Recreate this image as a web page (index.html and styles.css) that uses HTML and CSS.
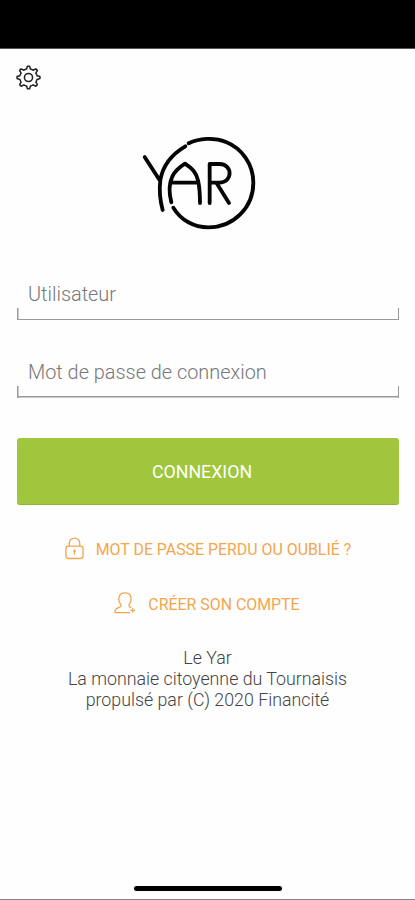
FILE: index.html
```
<!DOCTYPE html>
<html lang="fr">
<head>
<meta charset="utf-8">
<title>Le Yar</title>
<link rel="stylesheet" href="styles.css">
</head>
<body>
<div class="status"></div>
<main class="screen">
  <svg class="gear" viewBox="0 0 26 26"><path d="M11 4.2 11.9 1.2h2.2L15 4.2a9 9 0 0 1 2.8 1.2L20.6 4l1.6 1.6-1.5 2.8a9 9 0 0 1 1.2 2.7l3 .9v2.1l-3 .9a9 9 0 0 1-1.2 2.8l1.5 2.7-1.6 1.6-2.8-1.5A9 9 0 0 1 15 21.8l-.9 3h-2.2l-.9-3a9 9 0 0 1-2.8-1.2l-2.8 1.5-1.6-1.6 1.5-2.7A9 9 0 0 1 4.1 15l-3-.9V12l3-.9a9 9 0 0 1 1.2-2.7L3.8 5.6 5.4 4l2.8 1.4A9 9 0 0 1 11 4.2Z"/><circle cx="13" cy="13" r="4.2"/></svg>
  <svg class="logo" viewBox="0 0 390 345"><path d="M164 55C195 40 240 36 276 51C324 70 358 118 358 173C358 248 298 307 223 307C180 307 141 286 118 248M154 64C113 88 86 124 79 165C75 198 78 226 86 255M32 96 77 166M112 232C105 205 106 175 114 157C121 140 135 127 153 116C174 130 187 142 192 166Q198 192 198 234M111 173H191M227 234V117H256C297 117 297 173 256 173H227M248 175 285 234"/></svg>
  <form class="form">
    <label class="field"><span class="user">Utilisateur</span></label>
    <label class="field"><span class="pass">Mot de passe de connexion</span></label>
    <button class="login" type="button"><span>CONNEXION</span></button>
  </form>
  <a class="link lost"><svg class="lock" viewBox="0 0 20 24"><rect x="1" y="9.5" width="18" height="13" rx="2.5"/><path d="M4.5 9.5V6.5a5.5 5.5 0 0 1 11 0v3M10 15v3"/><circle cx="10" cy="14.5" r=".7"/></svg><span>MOT DE PASSE PERDU OU OUBLIÉ ?</span></a>
  <a class="link create"><svg class="person" viewBox="0 0 24 24"><path d="M17 22.5H1.2C.8 19 2.3 17.8 5 17c3-.8 3.2-1.8 2.4-3.6C5 10.5 4.8 7 6 4c2-4 10-4 12 0 1.2 3 .8 6.5-1.4 9.400-.6 1.600-.2 2.800 1.800 3.400M18.500 20h4M20.500 18v4"/></svg><span>CRÉER SON COMPTE</span></a>
  <footer class="about">
    <p>Le Yar</p>
    <p>La monnaie citoyenne du Tournaisis</p>
    <p>propulsé par (C) 2020 Financité</p>
  </footer>
  <div class="home"></div>
</main>
</body>
</html>
```
FILE: styles.css
```
* { box-sizing: border-box; }
body { margin: 0; height: 900px; display: flex; flex-direction: column; background: #fefefe; font-family: Roboto, "Liberation Sans", sans-serif; font-weight: 300; overflow: hidden; }
.status { height: 49px; flex: none; background: #000; border-bottom: 1px solid #555; }
.screen { flex: 1; display: flex; flex-direction: column; align-items: center; border-bottom: 1px solid #858585; }
svg { fill: none; stroke-linecap: round; stroke-linejoin: round; flex: none; overflow: visible; }
.gear { width: 25px; height: 25px; margin: 15.5px 0 0 15.5px; align-self: flex-start; stroke: #222; stroke-width: 1.6; }
.logo { width: 130px; height: 115px; margin: 35.5px 0 0 -17px; stroke: #050505; stroke-width: 11.5; }
.form { width: 382px; margin: 35px 0 0 1px; display: flex; flex-direction: column; }
.field { height: 45px; margin-bottom: 32.5px; padding: 6px 11px 0; display: block; color: #777; font-size: 19.9px; line-height: 28px; white-space: nowrap;
  background: linear-gradient(#999,#999) left bottom / 1.5px 12px no-repeat, linear-gradient(#999,#999) right bottom / 1.5px 12px no-repeat, linear-gradient(#999,#999) left bottom / 100% 1.5px no-repeat; }
.login { height: 67px; margin-top: 8px; padding: 0; border: 0; border-bottom: 1px solid #8fb335; border-radius: 3px; background: #9fc63d; color: #fff; font: 400 17.8px Roboto, sans-serif; }
.login span { position: relative; left: -6px; }
.link { display: flex; align-items: center; color: #f3a64e; font-size: 15.9px; font-weight: 370; white-space: nowrap; }
.link span { padding-top: 2px; }
.link svg { stroke: #f3a64e; stroke-width: 1.4; }
.lost { margin: 31px 0 0 1px; height: 24px; gap: 12px; }
.create { margin: 31px 0 0 -1px; height: 24px; gap: 12px; }
.lock { width: 19px; height: 23px; }
.person { width: 22px; height: 24px; }
.about { margin-top: 32px; color: #444; font-size: 17.8px; line-height: 21px; text-align: center; }
.about p { margin: 0; white-space: nowrap; }
.home { margin-top: auto; margin-bottom: 8px; width: 148px; height: 5px; border-radius: 3px; background: #000; }
```
